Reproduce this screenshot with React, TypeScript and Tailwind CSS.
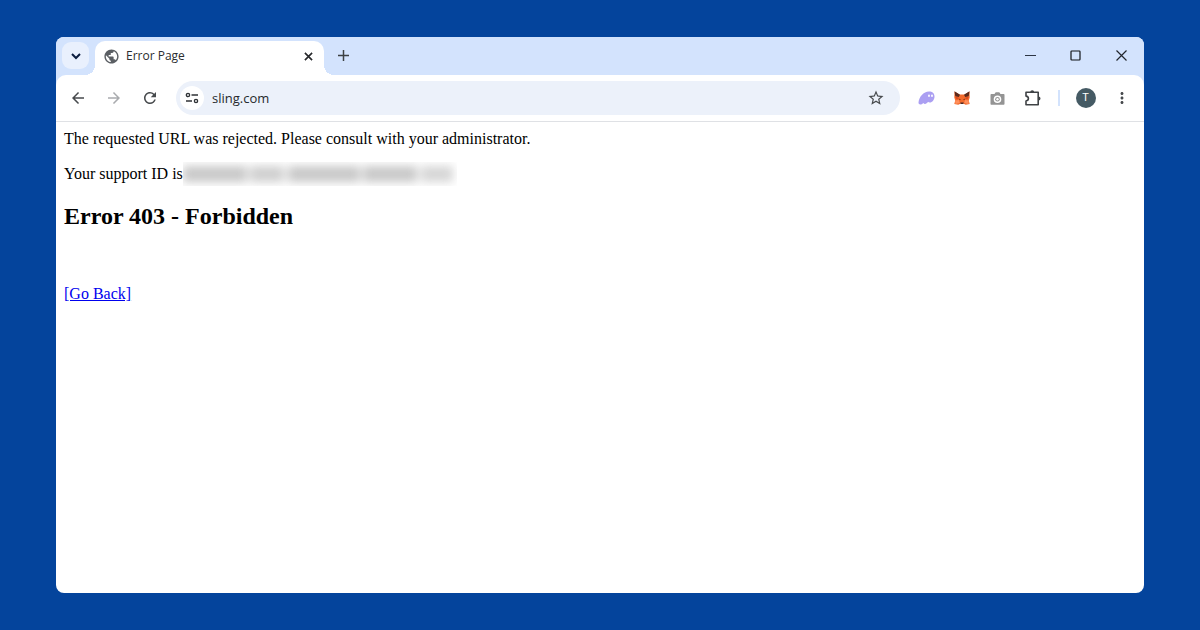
import type { ReactNode } from "react";
import {
  MdArrowBack,
  MdArrowForward,
  MdMoreVert,
  MdPublic,
  MdRefresh,
  MdStarOutline,
} from "react-icons/md";

type IconButtonProps = {
  label: string;
  className?: string;
  children: ReactNode;
};

const IconButton = ({ label, className = "size-9", children }: IconButtonProps) => (
  <button
    type="button"
    aria-label={label}
    className={`flex shrink-0 items-center justify-center ${className}`}
  >
    {children}
  </button>
);

const TabStrip = () => (
  <div className="flex h-[38px] items-end bg-[#d3e3fd]">
    <IconButton
      label="Search tabs"
      className="mb-[6px] ml-[6px] h-[27px] w-[27px] rounded-[9px] bg-[#e9f0fd]"
    >
      <svg viewBox="0 0 10 10" className="size-[10px]" fill="none" stroke="#0b1d3f" strokeWidth="2">
        <path d="M1 3l4 4 4-4" />
      </svg>
    </IconButton>
    {/* curved feet on both sides of the tab */}
    <div className="-ml-1 size-[10px] bg-[radial-gradient(circle_at_0_0,transparent_10px,white_10px)]" />
    <div className="flex h-[34px] w-[229px] items-center rounded-t-[10px] bg-white pr-[10px] pb-1 pl-2">
      <MdPublic className="size-[17px] text-[#5b5f64]" />
      <span className="ml-[6px] flex-1 font-['Open_Sans',sans-serif] text-[12px] leading-4 text-[#2b2d30]">
        Error Page
      </span>
      <IconButton label="Close tab" className="size-3">
        <svg viewBox="0 0 10 10" className="size-[9px]" stroke="#26282b" strokeWidth="1.8">
          <path d="M1 1l8 8M9 1l-8 8" />
        </svg>
      </IconButton>
    </div>
    <div className="size-[10px] bg-[radial-gradient(circle_at_100%_0,transparent_10px,white_10px)]" />
    <IconButton label="New tab" className="h-[38px] w-[18px] pb-[2px]">
      <svg viewBox="0 0 11 11" className="size-[11px]" stroke="#3c4043" strokeWidth="1.5">
        <path d="M5.5 0v11M0 5.5h11" />
      </svg>
    </IconButton>
    <div className="ml-auto flex">
      <IconButton label="Minimize" className="h-[38px] w-[45px] pb-[2px]">
        <svg viewBox="0 0 11 11" className="size-[11px]" stroke="#2c3544">
          <path d="M0 5.5h11" />
        </svg>
      </IconButton>
      <IconButton label="Maximize" className="h-[38px] w-[45px] pb-[2px]">
        <svg viewBox="0 0 11 11" className="size-[11px]" fill="none" stroke="#111418" strokeWidth="1.2">
          <rect x="1" y="1" width="9" height="9" rx="0.7" />
        </svg>
      </IconButton>
      <IconButton label="Close" className="h-[38px] w-[46px] pb-[2px]">
        <svg viewBox="0 0 11 11" className="size-[11px]" stroke="#22262d" strokeWidth="1.2">
          <path d="M0.5 0.5l10 10M10.5 0.5l-10 10" />
        </svg>
      </IconButton>
    </div>
  </div>
);

const GhostIcon = () => (
  <svg viewBox="0 0 17 14" className="h-[14px] w-[17px]">
    <path
      fill="#ab9ff2"
      d="M0.500 11.500C1 6 5.500 0.500 11 0.500c3.400 0 5.500 1.900 5.500 5 0 3.300-2.200 6-4.700 6-.9 0-1.500-.2-1.800-.7-.8 1.300-1.900 2.200-3 2.200-.8 0-1.300-.4-1.500-1-.9.900-2 1.500-3 1.500-1.300 0-2.100-.7-2-2z"
    />
    <ellipse cx="11" cy="4.800" rx="0.900" ry="1.200" fill="white" />
    <ellipse cx="14" cy="4.800" rx="0.900" ry="1.200" fill="white" />
  </svg>
);

const FoxIcon = () => (
  <svg viewBox="0 0 16 14" className="h-[14px] w-4">
    <path fill="#f26a2c" d="M0.500 0.500L5.500 3.500h5l5-3 .200 6-.900 3 .900 3.500-4 .700-2-.900H6.300l-2 .900-4-.700.900-3.500-.900-3z" />
    <path fill="#5c2a1c" d="M0.500 0.300L6 3.700 4.800 6 1.300 5.200zM15.500 0.300L10 3.700 11.200 6l3.500-.8z" />
    <path fill="#ff8f5c" d="M1 9.500l4-.5.800 3-4.300 1zM15 9.500l-4-.5-.8 3 4.300 1z" />
    <path fill="#d9441a" d="M1.200 6l3.500.5L3 8.500zM14.800 6l-3.500.5L13 8.500z" />
    <path fill="#6b2413" d="M4.300 7.300l2.500 1.100-.8.900zM11.700 7.300L9.200 8.400l.8.900z" />
    <path fill="#4a2a26" d="M6.300 11.500h3.400l-.4 1.500H6.700z" />
  </svg>
);

const CameraIcon = () => (
  <svg viewBox="0 0 15 13" className="h-[13px] w-[15px]">
    <path
      fill="#949494"
      fillRule="evenodd"
      d="M1.500 2h3L5.700 0.300h3.600L10.500 2h3c.6 0 1 .4 1 1v8.700c0 .6-.4 1-1 1h-12c-.6 0-1-.4-1-1V3c0-.6.4-1 1-1zM7.500 3.400a3.800 3.800 0 100 7.600 3.800 3.800 0 000-7.600z"
    />
    <circle cx="7.500" cy="7.200" r="2.300" fill="#949494" />
    <circle cx="7.500" cy="7.200" r="1.200" fill="white" />
  </svg>
);

const PuzzleIcon = () => (
  <svg viewBox="0 0 18 18" className="size-[18px]">
    <path
      fill="none"
      stroke="#3f4245"
      strokeWidth="1.6"
      strokeLinejoin="round"
      d="M2 3.300h12.200V15.800H2v-3.800c1.500-.2 2.400-1.100 2.400-2.400S3.500 7.300 2 7.100z"
    />
    <path fill="#3f4245" d="M6.200 3.200a2 2 0 014 0zM14.500 7.500a2 2 0 010 4z" />
  </svg>
);

const Toolbar = () => (
  <div className="bg-[#d3e3fd]">
    <div className="flex h-[47px] items-center rounded-t-[10px] border-b border-[#dfe1e5] bg-white pl-1 text-[#474a4d]">
      <IconButton label="Back">
        <MdArrowBack className="size-[18px]" />
      </IconButton>
      <IconButton label="Forward">
        <MdArrowForward className="size-[18px] text-[#a9abae]" />
      </IconButton>
      <IconButton label="Reload">
        <MdRefresh className="size-[18px]" />
      </IconButton>
      <div className="ml-2 flex h-[34px] flex-1 items-center rounded-full bg-[#ecf1fa] pr-[6px] pl-1">
        <IconButton label="View site information" className="size-6 rounded-full bg-white">
          <svg viewBox="0 0 14 12" className="h-3 w-[14px]" fill="none" stroke="#2f3236" strokeWidth="1.4">
            <circle cx="3" cy="3" r="1.6" />
            <path d="M6.5 3H13M1 9h6" />
            <circle cx="11" cy="9" r="1.6" />
          </svg>
        </IconButton>
        <input
          type="text"
          aria-label="Address"
          defaultValue="sling.com"
          className="ml-2 min-w-0 flex-1 bg-transparent font-['Open_Sans',sans-serif] text-[13px] leading-5 text-[#26292d] outline-none"
        />
        <IconButton label="Bookmark this page">
          <MdStarOutline className="size-[18px]" />
        </IconButton>
      </div>
      <div className="ml-2 flex items-center">
        <IconButton label="Phantom">
          <GhostIcon />
        </IconButton>
        <IconButton label="MetaMask">
          <FoxIcon />
        </IconButton>
        <IconButton label="Screenshot" className="h-9 w-[35px]">
          <CameraIcon />
        </IconButton>
        <IconButton label="Extensions">
          <PuzzleIcon />
        </IconButton>
      </div>
      <div className="mx-[7px] h-4 w-[2px] bg-[#d3e3fd]" />
      <IconButton label="Profile" className="h-9 w-[37px]">
        <span className="flex size-5 items-center justify-center rounded-full bg-[#455a64] font-['Roboto',sans-serif] text-[11px] text-white">
          T
        </span>
      </IconButton>
      <IconButton label="Menu" className="mr-1 size-9">
        <MdMoreVert className="size-[18px]" />
      </IconButton>
    </div>
  </div>
);

const ErrorPage = () => (
  <main className="px-2 pt-2 font-['Liberation_Serif',serif] text-[16px] leading-[18px] text-black">
    <p>The requested URL was rejected. Please consult with your administrator.</p>
    <p className="mt-[14px] flex items-center">
      <span>Your support ID is</span>
      {/* redacted id */}
      <span className="flex h-6 w-[274px] items-center overflow-hidden" aria-hidden="true">
        <span className="flex flex-1 justify-between pr-1 opacity-40 blur-[5px]">
          <span className="h-4 w-[64px] bg-[#777777]" />
          <span className="h-4 w-[34px] bg-[#888888]" />
          <span className="h-4 w-[72px] bg-[#777777]" />
          <span className="h-4 w-[54px] bg-[#777777]" />
          <span className="h-4 w-[32px] bg-[#999999]" />
        </span>
      </span>
    </p>
    <h1 className="mt-4 text-[24px] leading-[28px] font-bold">Error 403 - Forbidden</h1>
    <p className="mt-[55px]">
      <a href="#back" className="text-[#0000ee] underline">
        [Go Back]
      </a>
    </p>
  </main>
);

const App = () => (
  <div className="flex min-h-screen flex-col bg-[#04449c] px-14 py-[37px]">
    <div className="flex flex-1 flex-col overflow-hidden rounded-lg bg-white">
      <TabStrip />
      <Toolbar />
      <ErrorPage />
    </div>
  </div>
);

export default App;
